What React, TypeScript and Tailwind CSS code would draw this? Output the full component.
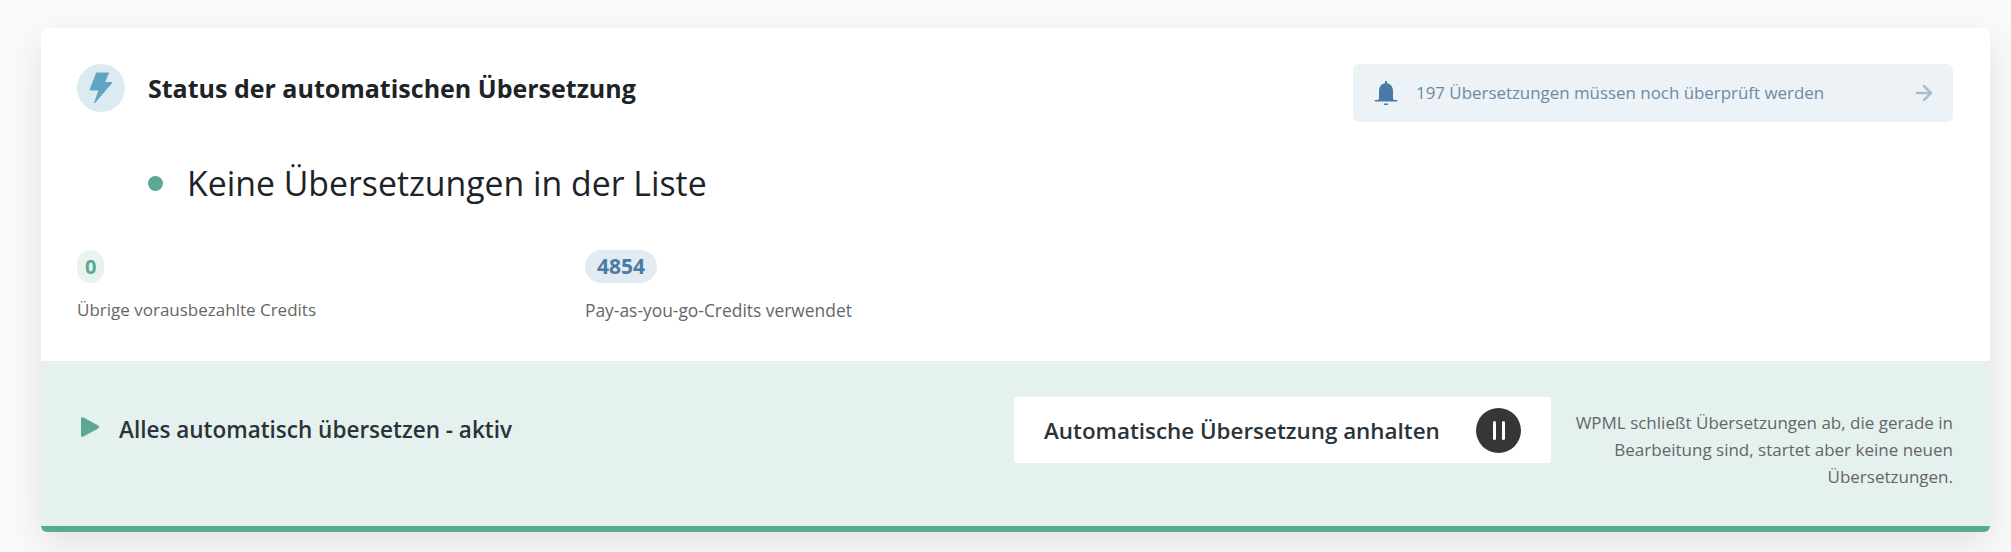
import { ArrowRight } from 'lucide-react';

const font = 'font-["Open_Sans","Noto_Sans",sans-serif]';

function BoltIcon() {
  return (
    <svg viewBox="0 0 24 32" className="h-[32px] w-[24px]">
      <path d="M7.500 1H19.500L15.500 10.500H23L5.500 31L10 18H1z" fill="#5fa5c4" stroke="#5fa5c4" strokeWidth="1" strokeLinejoin="round" />
    </svg>
  );
}

function BellIcon() {
  return (
    <svg viewBox="0 0 24 26" className="h-[26px] w-[24px]">
      <path d="M11 1h2v2.200c3.800.6 6 3.600 6 7.800v7c0 1 .5 1.700 1.500 2.200H3.500C4.500 19.700 5 19 5 18v-7c0-4.200 2.200-7.200 6-7.800z" fill="#4a7ba6" />
      <rect x="0.500" y="20" width="23" height="1.500" rx="0.700" fill="#4a7ba6" />
      <rect x="10" y="23.500" width="4" height="1.500" fill="#4a7ba6" />
    </svg>
  );
}

export default function App() {
  return (
    <div className={`${font} h-[552px] bg-[#fafafa] pt-[28px] pr-[21px] pl-[41px]`}>
      <div className="flex h-[504px] flex-col overflow-hidden rounded-[6px] bg-white shadow-[0_12px_40px_rgba(0,0,0,0.1)]">
        <div className="h-[333px] pt-[36px] pr-[37px] pl-[36px]">
          <div className="flex items-start justify-between">
            <div className="flex items-center gap-[23px]">
              <div className="flex h-[48px] w-[48px] items-center justify-center rounded-full bg-[#dceaf1]">
                <BoltIcon />
              </div>
              <h2 className="pt-[2px] text-[25px] font-bold text-[#1d2327]">Status der automatischen Übersetzung</h2>
            </div>
            <div className="flex h-[58px] w-[600px] items-center rounded-[6px] bg-[#edf2f6] pr-[17px] pl-[21px]">
              <BellIcon />
              <span className="ml-[18px] text-[16.9px] text-[#6b8aa6]">197 Übersetzungen müssen noch überprüft werden</span>
              <ArrowRight strokeWidth={2.5} className="ml-auto h-[24px] w-[24px] text-[#a5bfd4]" />
            </div>
          </div>
          <div className="mt-[38px] ml-[71px] flex items-center gap-[24px]">
            <span className="h-[15px] w-[15px] rounded-full bg-[#5ba893]" />
            <span className="text-[33.8px] leading-[46px] text-[#1d2327]">Keine Übersetzungen in der Liste</span>
          </div>
          <div className="mt-[44px] flex">
            <div className="w-[508px]">
              <span className="inline-block h-[33px] rounded-full bg-[#e8f3f0] px-[8px] text-[20px] leading-[33px] font-bold text-[#5ba893]">0</span>
              <p className="mt-[14px] text-[17px] text-[#666]">Übrige vorausbezahlte Credits</p>
            </div>
            <div>
              <span className="inline-block h-[33px] rounded-full bg-[#e3ebf2] px-[12px] text-[21px] leading-[33px] font-bold text-[#4a7ba6]">4854</span>
              <p className="mt-[14px] text-[17.4px] text-[#666]">Pay-as-you-go-Credits verwendet</p>
            </div>
          </div>
        </div>
        <div className="flex flex-1 items-start bg-[#e5f1ee] pt-[36px] pr-[37px] pl-[40px]">
          <svg viewBox="0 0 18 20" className="mt-[20px] h-[20px] w-[18px]">
            <path d="M0 2C0 .5 1.200-.2 2.500.5L16.800 8.300c1.500.8 1.500 2.600 0 3.400L2.500 19.500C1.200 20.200 0 19.500 0 18z" fill="#5ba893" />
          </svg>
          <span className="mt-[16px] ml-[20px] text-[22.5px] font-semibold text-[#2c3338]">Alles automatisch übersetzen - aktiv</span>
          <div className="ml-auto flex h-[66px] w-[537px] items-center justify-between rounded-[4px] bg-white pr-[30px] pl-[30px]">
            <span className="pt-[2px] text-[22.4px] font-semibold text-[#2c3338]">Automatische Übersetzung anhalten</span>
            <span className="flex h-[45px] w-[45px] items-center justify-center gap-[6px] rounded-full bg-[#363636]">
              <span className="h-[19px] w-[3px] rounded-full bg-white" />
              <span className="h-[19px] w-[3px] rounded-full bg-white" />
            </span>
          </div>
          <p className="mt-[12px] ml-[20px] w-[382px] text-right text-[17px] leading-[27px] text-[#666]">WPML schließt Übersetzungen ab, die gerade in Bearbeitung sind, startet aber keine neuen Übersetzungen.</p>
        </div>
        <div className="h-[6px] bg-[#5ba893]" />
      </div>
    </div>
  );
}
